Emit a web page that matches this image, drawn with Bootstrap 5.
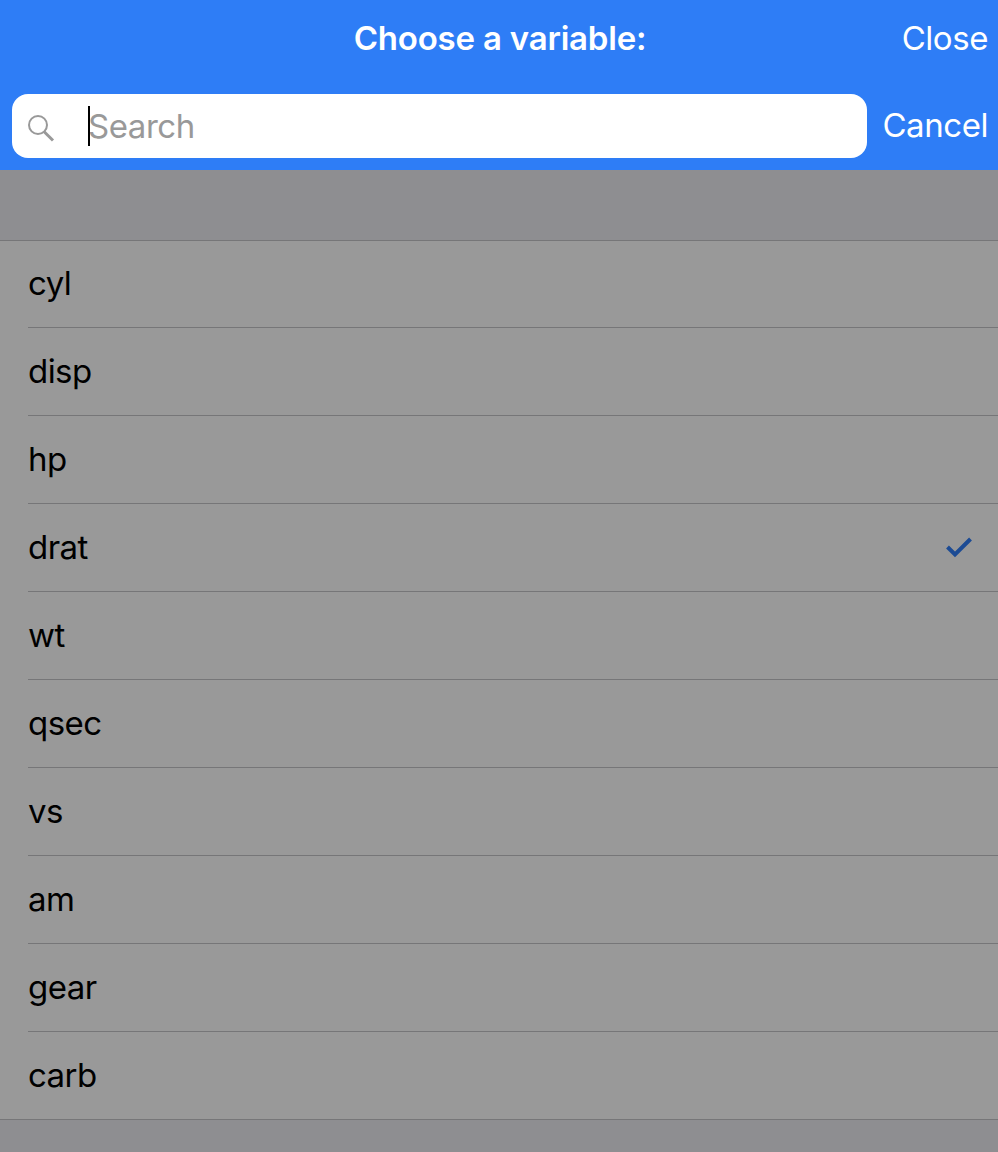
<!DOCTYPE html>
<html lang="en">
<head>
<meta charset="utf-8">
<meta name="viewport" content="width=device-width, initial-scale=1">
<title>Choose a variable</title>
<link href="https://cdn.jsdelivr.net/npm/bootstrap@5.3.0/dist/css/bootstrap.min.css" rel="stylesheet">
<style>
  body { font: 400 33px/40px Inter, "Liberation Sans", sans-serif; letter-spacing: -.45px; background: #8e8e91; color: #000; min-height: 1152px; overflow: hidden; }
  .top-panel { height: 170px; background: #2e7df6; color: #fff; }
  .title-row { height: 94px; padding: 18px 10px 0; }
  .panel-title { font-size: 33px; line-height: 40px; font-weight: 600; letter-spacing: -.2px; padding-left: 2px; }
  .search-row { padding: 0 10px 0 12px; }
  .search-field { width: 855px; height: 64px; border-radius: 16px; background: #fff; color: #999; padding-left: 15px; }
  .search-icon { margin-top: 4px; }
  .cancel { padding-bottom: 2px; }
  .caret { width: 2px; height: 40px; left: 0; top: 0; background: #000; }
  .search-hint { margin-left: 33px; }
  .variables { margin-top: 70px; border-top: 1px solid #767678; border-bottom: 1px solid #767678; background: #999; }
  .variable { height: 88px; margin-left: 28px; padding: 0 25px 1px 0; border-bottom: 1px solid #767678; letter-spacing: -.55px; }
  .variable:first-child { height: 87px; padding-bottom: 2px; }
  .variable:last-child { height: 87px; border-bottom: 0; }
  .tick { margin-bottom: 1px; }
</style>
</head>
<body>
<header class="top-panel">
  <div class="title-row row g-0 align-items-start">
    <h1 class="panel-title col-8 offset-2 text-center mb-0">Choose a variable:</h1>
    <div class="col-2 text-end">Close</div>
  </div>
  <div class="search-row d-flex align-items-center justify-content-between">
    <div class="search-field d-flex align-items-center">
      <svg class="search-icon" width="28" height="28" viewBox="0 0 28 28" fill="none" stroke="#999" aria-hidden="true"><circle cx="11" cy="11" r="9" stroke-width="2"/><path d="M17.2 17.7 26 26.5" stroke-width="3"/></svg>
      <div class="search-hint position-relative"><span class="caret position-absolute"></span>Search</div>
    </div>
    <div class="cancel">Cancel</div>
  </div>
</header>
<main>
  <ul class="variables list-unstyled mb-0">
    <li class="variable d-flex align-items-center">cyl</li>
    <li class="variable d-flex align-items-center">disp</li>
    <li class="variable d-flex align-items-center">hp</li>
    <li class="variable d-flex align-items-center justify-content-between">drat
      <svg class="tick" width="28" height="24" viewBox="0 0 28 24" fill="none" stroke="#1c4b94" stroke-width="4" aria-hidden="true"><path d="M2.5 12 10 19.5 25.5 4"/></svg>
    </li>
    <li class="variable d-flex align-items-center">wt</li>
    <li class="variable d-flex align-items-center">qsec</li>
    <li class="variable d-flex align-items-center">vs</li>
    <li class="variable d-flex align-items-center">am</li>
    <li class="variable d-flex align-items-center">gear</li>
    <li class="variable d-flex align-items-center">carb</li>
  </ul>
</main>
<script src="https://cdn.jsdelivr.net/npm/bootstrap@5.3.0/dist/js/bootstrap.bundle.min.js"></script>
</body>
</html>
